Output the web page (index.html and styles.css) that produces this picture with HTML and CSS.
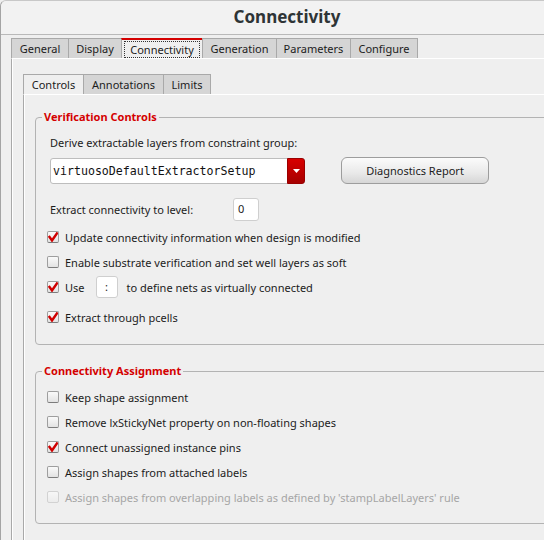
FILE: index.html
```html
<!DOCTYPE html>
<html lang="en">
<head>
<meta charset="utf-8">
<title>Connectivity</title>
<link rel="stylesheet" href="styles.css">
</head>
<body>
<div class="window">
  <header class="titlebar">Connectivity</header>
  <div class="outer">
    <nav class="tabs">
      <div class="tab t-general">General</div>
      <div class="tab t-display">Display</div>
      <div class="tab active t-connectivity"><span class="focus">Connectivity</span></div>
      <div class="tab t-generation">Generation</div>
      <div class="tab t-parameters">Parameters</div>
      <div class="tab last t-configure">Configure</div>
    </nav>
    <div class="pane outer-pane">
      <nav class="tabs">
        <div class="tab current t-controls">Controls</div>
        <div class="tab t-annotations">Annotations</div>
        <div class="tab last t-limits">Limits</div>
      </nav>
      <div class="pane inner-pane">
        <fieldset class="group group-verify">
          <legend>Verification Controls</legend>
          <div class="text-row derive-row">Derive extractable layers from constraint group:</div>
          <div class="combo-row">
            <div class="combo">
              <span class="combo-text">virtuosoDefaultExtractorSetup</span>
              <span class="combo-btn"><svg width="7" height="4" viewBox="0 0 7 4"><polygon points="0,0 7,0 3.5,4" fill="#fff"/></svg></span>
            </div>
            <div class="button">Diagnostics Report</div>
          </div>
          <div class="text-row level-row">
            <span class="level-label">Extract connectivity to level:</span>
            <span class="field level-field">0</span>
          </div>
          <div class="check-row first">
            <span class="cb"><svg width="10" height="10" viewBox="0 0 10 10"><path d="M1.5 5 L4 8.4 L8.9 1.5" fill="none" stroke="#d00000" stroke-width="2.5" stroke-linecap="square" stroke-linejoin="miter"/></svg></span>
            <span>Update connectivity information when design is modified</span>
          </div>
          <div class="check-row">
            <span class="cb"></span>
            <span>Enable substrate verification and set well layers as soft</span>
          </div>
          <div class="check-row">
            <span class="cb"><svg width="10" height="10" viewBox="0 0 10 10"><path d="M1.5 5 L4 8.4 L8.9 1.5" fill="none" stroke="#d00000" stroke-width="2.5" stroke-linecap="square" stroke-linejoin="miter"/></svg></span>
            <span>Use</span>
            <span class="field sep-field">:</span>
            <span class="after-field">to define nets as virtually connected</span>
          </div>
          <div class="check-row spaced">
            <span class="cb"><svg width="10" height="10" viewBox="0 0 10 10"><path d="M1.5 5 L4 8.4 L8.9 1.5" fill="none" stroke="#d00000" stroke-width="2.5" stroke-linecap="square" stroke-linejoin="miter"/></svg></span>
            <span>Extract through pcells</span>
          </div>
        </fieldset>

        <fieldset class="group group-assign">
          <legend>Connectivity Assignment</legend>
          <div class="check-row first">
            <span class="cb"></span>
            <span>Keep shape assignment</span>
          </div>
          <div class="check-row">
            <span class="cb"></span>
            <span>Remove lxStickyNet property on non-floating shapes</span>
          </div>
          <div class="check-row">
            <span class="cb"><svg width="10" height="10" viewBox="0 0 10 10"><path d="M1.5 5 L4 8.4 L8.9 1.5" fill="none" stroke="#d00000" stroke-width="2.5" stroke-linecap="square" stroke-linejoin="miter"/></svg></span>
            <span>Connect unassigned instance pins</span>
          </div>
          <div class="check-row">
            <span class="cb"></span>
            <span>Assign shapes from attached labels</span>
          </div>
          <div class="check-row disabled">
            <span class="cb"></span>
            <span>Assign shapes from overlapping labels as defined by 'stampLabelLayers' rule</span>
          </div>
        </fieldset>
      </div>
    </div>
  </div>
</div>
</body>
</html>
```

FILE: styles.css
```css
html, body {
  margin: 0;
  padding: 0;
}

body {
  width: 544px;
  height: 540px;
  overflow: hidden;
  background: #efefef;
  font-family: "Noto Sans", "Open Sans", sans-serif;
  font-size: 11px;
  color: #1c1c1c;
}

.window {
  box-sizing: border-box;
  width: 600px;
  height: 540px;
  border-left: 1px solid #a4a4a4;
  border-top: 1px solid #c8c8c8;
  border-top-left-radius: 6px;
  display: flex;
  flex-direction: column;
}

.titlebar {
  height: 33px;
  line-height: 32px;
  border-bottom: 1px solid #b9b9b9;
  background: #f2f2f2;
  text-align: center;
  font-weight: 700;
  font-size: 17px;
  color: #2e3436;
  width: 572px;
  border-top-left-radius: 6px;
}

.outer {
  flex: 1;
  display: flex;
  flex-direction: column;
  padding: 3px 0 0 10px;
}

.tabs {
  display: flex;
  height: 20px;
}

.tab {
  box-sizing: border-box;
  height: 20px;
  padding: 0;
  text-align: center;
  line-height: 20px;
  border-top: 1px solid #a9a9a9;
  border-left: 1px solid #a9a9a9;
  background: #d5d5d5;
  color: #1c1c1c;
  white-space: nowrap;
}

.tab.last {
  border-right: 1px solid #a9a9a9;
}

.t-general { width: 57px; }
.t-display { width: 53px; }
.t-connectivity { width: 81px; }
.t-generation { width: 74px; }
.t-parameters { width: 74px; }
.t-configure { width: 68px; }
.t-controls { width: 60px; }
.t-annotations { width: 80px; }
.t-limits { width: 48px; }

.tab.active {
  background: #efefef;
  border-top: 2px solid #d40000;
  line-height: 15px;
  padding: 0 2px;
}

.tab.current {
  background: #efefef;
}

.focus {
  display: block;
  margin: 1px 0 0;
  border: 1px dotted #333;
  line-height: 15px;
}

.pane {
  border-top: 1px solid #ffffff;
  border-left: 1px solid #a9a9a9;
  box-shadow: inset 1px 0 #ffffff;
}

.outer-pane {
  flex: 1;
  display: flex;
  flex-direction: column;
  padding: 15px 0 0 11px;
}

.inner-pane {
  flex: 1;
  padding: 0 0 0 11px;
}

.group {
  margin: 15px 0 0 0;
  padding: 0 0 15px 0;
  width: 560px;
  min-width: 0;
  border: 1px solid #b3b3b3;
  border-radius: 4px;
  box-sizing: border-box;
}

.group-verify {
  padding-bottom: 16px;
}

.group legend {
  margin-left: 6px;
  padding: 0 2px;
  line-height: 14px;
  font-weight: 700;
  color: #d40000;
}

.group-assign {
  margin-top: 19px;
}

.text-row {
  margin-left: 14px;
  line-height: 16px;
}

.derive-row {
  margin-top: 11px;
  height: 16px;
}

.combo-row {
  display: flex;
  align-items: center;
  height: 27px;
  margin: 6px 0 0 14px;
}

.combo {
  box-sizing: border-box;
  width: 255px;
  height: 26px;
  display: flex;
  align-items: stretch;
  background: #ffffff;
  border: 1px solid #bdbdbd;
  border-radius: 3px;
}

.combo-text {
  flex: 1;
  padding-left: 2px;
  font-family: "DejaVu Sans Mono", "Liberation Mono", monospace;
  font-size: 11.6px;
  line-height: 24px;
  color: #111;
}

.combo-btn {
  width: 16px;
  margin: -1px -1px -1px 0;
  display: flex;
  align-items: center;
  justify-content: center;
  background: linear-gradient(#d80000, #a60000);
  border: 1px solid #9a0000;
  border-radius: 0 3px 3px 0;
}

.button {
  box-sizing: border-box;
  width: 148px;
  height: 27px;
  margin-left: 36px;
  line-height: 25px;
  text-align: center;
  border: 1px solid #9d9d9d;
  border-radius: 6px;
  background: linear-gradient(#fbfbfb, #e9e9e9 60%, #d6d6d6);
  color: #1c1c1c;
}

.level-row {
  display: flex;
  align-items: center;
  height: 23px;
  margin-top: 14px;
}

.level-label {
  width: 183px;
}

.field {
  box-sizing: border-box;
  background: #ffffff;
  border: 1px solid #cfcfcf;
  border-radius: 3px;
}

.level-field {
  width: 26px;
  height: 23px;
  line-height: 20px;
  padding-left: 4px;
}

.check-row {
  display: flex;
  align-items: center;
  height: 22px;
  margin: 3px 0 0 11px;
  white-space: nowrap;
}

.check-row.first {
  margin-top: 5px;
}

.group-assign .check-row.first {
  margin-top: 8px;
}

.check-row.spaced {
  margin-top: 8px;
}

.cb {
  box-sizing: border-box;
  flex: none;
  width: 12px;
  height: 12px;
  margin-right: 6px;
  display: flex;
  align-items: center;
  justify-content: center;
  border: 1px solid #9e9e9e;
  border-bottom-color: #7c7c7c;
  border-radius: 2px;
  background: linear-gradient(#fafafa, #e3e3e3);
}

.sep-field {
  width: 22px;
  height: 22px;
  line-height: 20px;
  text-align: center;
  margin-left: 11px;
}

.after-field {
  margin-left: 9px;
}

.check-row.disabled {
  color: #a6a6a6;
}

.check-row.disabled .cb {
  border-color: #d2d2d2;
  background: linear-gradient(#f7f7f7, #ececec);
}
```
